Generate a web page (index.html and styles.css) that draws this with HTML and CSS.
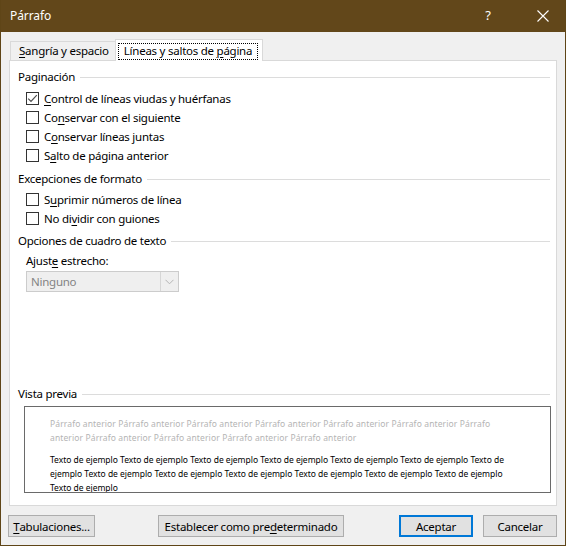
FILE: index.html
```html
<!DOCTYPE html>
<html lang="es">
<head>
<meta charset="utf-8">
<title>Párrafo</title>
<link rel="stylesheet" href="styles.css">
</head>
<body>
<div class="window">
  <div class="titlebar">
    <span class="title">Párrafo</span>
    <span class="help">?</span>
    <span class="close"><svg width="12" height="12" viewBox="0 0 12 12"><path d="M0.5 0.5 L11.5 11.5 M11.5 0.5 L0.5 11.5" stroke="#fff" stroke-width="1.1" fill="none"/></svg></span>
  </div>
  <div class="tabs">
    <div class="tab"><u>S</u>angría y espacio</div>
    <div class="tab active"><span class="focus">Líneas y saltos de <u>p</u>ágina</span></div>
  </div>
  <div class="panel">
    <div class="group-title first"><span>Paginación</span></div>
    <div class="checks">
      <label class="check"><span class="box"><svg width="11" height="11" viewBox="0 0 11 11"><path d="M1.2 5.6 L4 8.4 L9.8 2.2" stroke="#4d4d4d" stroke-width="1.2" fill="none"/></svg></span><span><u>C</u>ontrol de líneas viudas y huérfanas</span></label>
      <label class="check"><span class="box"></span><span>Co<u>n</u>servar con el siguiente</span></label>
      <label class="check"><span class="box"></span><span>C<u>o</u>nservar líneas juntas</span></label>
      <label class="check"><span class="box"></span><span>S<u>a</u>lto de página anterior</span></label>
    </div>
    <div class="group-title second"><span>Excepciones de formato</span></div>
    <div class="checks second-checks">
      <label class="check"><span class="box"></span><span>S<u>u</u>primir números de línea</span></label>
      <label class="check"><span class="box"></span><span>No di<u>v</u>idir con guiones</span></label>
    </div>
    <div class="group-title third"><span>Opciones de cuadro de texto</span></div>
    <div class="field-label">Ajust<u>e</u> estrecho:</div>
    <div class="select">
      <span class="select-value">Ninguno</span>
      <span class="select-arrow"><svg width="9" height="6" viewBox="0 0 9 6"><path d="M0.5 0.8 L4.5 4.8 L8.5 0.8" stroke="#b5b5b5" stroke-width="1" fill="none"/></svg></span>
    </div>
    <div class="spacer"></div>
    <div class="group-title fourth"><span>Vista previa</span></div>
    <div class="preview">
      <div class="prev-para">
        <div class="line">Párrafo anterior Párrafo anterior Párrafo anterior Párrafo anterior Párrafo anterior Párrafo anterior Párrafo</div>
        <div class="line">anterior Párrafo anterior Párrafo anterior Párrafo anterior Párrafo anterior</div>
      </div>
      <div class="sample-para">
        <div class="line">Texto de ejemplo Texto de ejemplo Texto de ejemplo Texto de ejemplo Texto de ejemplo Texto de ejemplo Texto de</div>
        <div class="line">ejemplo Texto de ejemplo Texto de ejemplo Texto de ejemplo Texto de ejemplo Texto de ejemplo Texto de ejemplo</div>
        <div class="line">Texto de ejemplo</div>
      </div>
    </div>
  </div>
  <div class="footer">
    <button class="btn btn-tabs"><u>T</u>abulaciones...</button>
    <button class="btn btn-default">Establecer como pre<u>d</u>eterminado</button>
    <button class="btn btn-ok">Aceptar</button>
    <button class="btn btn-cancel">Cancelar</button>
  </div>
</div>
</body>
</html>
```

FILE: styles.css
```css
* { box-sizing: border-box; }
html, body { margin: 0; padding: 0; }
body {
  font-family: "Noto Sans", "Open Sans", sans-serif;
  font-size: 11.5px;
  letter-spacing: -0.25px;
  color: #000;
  background: #f0f0f0;
}
u { text-decoration: underline; text-underline-offset: 2px; text-decoration-thickness: 1px; }

.window {
  width: 566px;
  height: 546px;
  border: 1px solid #5f4517;
  border-top: none;
  background: #f0f0f0;
  display: flex;
  flex-direction: column;
}

.titlebar {
  height: 32px;
  background: #62471a;
  color: #fff;
  display: flex;
  align-items: center;
  padding-left: 9px;
  flex: none;
}
.title { font-size: 12px; flex: 1; padding-bottom: 1px; letter-spacing: -0.1px; }
.help { font-size: 13px; width: 12px; margin-right: 43px; text-align: center; padding-bottom: 2px; }
.close { width: 12px; height: 12px; margin-right: 16px; display: flex; flex: none; }

.tabs {
  display: flex;
  align-items: flex-end;
  padding-left: 9px;
  margin-top: 7px;
  height: 22px;
  margin-bottom: -1px;
  flex: none;
}
.tab {
  height: 20px;
  width: 106px;
  border: 1px solid #d9d9d9;
  border-bottom: none;
  background: #f0f0f0;
  padding-left: 8px;
  line-height: 18px;
  white-space: nowrap;
  flex: none;
}
.tab.active {
  height: 22px;
  width: 148px;
  margin-left: -1px;
  background: #fff;
  position: relative;
  z-index: 1;
  padding: 2px 0 0 2px;
}
.focus {
  display: inline-block;
  border: 1px dotted #000;
  width: 140px;
  height: 17px;
  line-height: 14px;
  text-align: center;
}

.panel {
  margin: 0 8px;
  height: 446px;
  border: 1px solid #d9d9d9;
  background: #fff;
  display: flex;
  flex-direction: column;
  padding: 8px 6px 12px 8px;
  flex: none;
}

.group-title {
  display: flex;
  align-items: center;
  height: 16px;
  line-height: 16px;
  white-space: nowrap;
}
.group-title::after {
  content: "";
  flex: 1;
  border-top: 1px solid #dcdcdc;
  margin-left: 5px;
  margin-top: 1px;
}
.group-title.second { margin-top: 6px; }
.group-title.third { margin-top: 5px; }
.group-title.fourth { margin-top: 0; }

.checks { margin-top: 4px; padding-left: 8px; display: flex; flex-direction: column; }
.second-checks { margin-top: 3px; }
.check {
  height: 19px;
  display: flex;
  align-items: center;
  white-space: nowrap;
}
.box {
  width: 13px;
  height: 13px;
  border: 1px solid #333;
  background: #fff;
  margin-right: 5px;
  display: flex;
  align-items: center;
  justify-content: center;
  flex: none;
}

.field-label {
  margin-top: 4px;
  padding-left: 8px;
  height: 16px;
  line-height: 16px;
}
.select {
  margin-top: 2px;
  margin-left: 8px;
  width: 153px;
  height: 21px;
  border: 1px solid #cccccc;
  background: #efefef;
  display: flex;
  align-items: center;
}
.select-value { flex: 1; padding-left: 4px; color: #838383; }
.select-arrow {
  width: 18px;
  height: 19px;
  border-left: 1px solid #d6d6d6;
  display: flex;
  align-items: center;
  justify-content: center;
}

.spacer { flex: 1; }

.preview {
  margin: 4px -1px 0 6px;
  height: 87px;
  border: 1px solid #6a6a6a;
  background: #fff;
  overflow: hidden;
  padding: 10px 0 0 25px;
  font-size: 8.5px;
  line-height: 14px;
}
.line { white-space: nowrap; }
.prev-para { color: #b4b4b4; letter-spacing: 0.12px; }
.sample-para { color: #000; margin-top: 8px; letter-spacing: -0.02px; }

.footer {
  display: flex;
  align-items: center;
  margin-top: 9px;
  padding-left: 7px;
}
.btn {
  font-family: inherit;
  font-size: 11.5px;
  letter-spacing: -0.25px;
  height: 22px;
  background: #e1e1e1;
  border: 1px solid #adadad;
  color: #000;
  padding: 0;
  margin: 0;
  display: flex;
  align-items: center;
  justify-content: center;
  flex: none;
}
.btn-tabs { width: 87px; }
.btn-default { width: 186px; margin-left: 63px; }
.btn-ok { width: 74px; margin-left: 55px; border: 2px solid #0078d7; }
.btn-cancel { width: 74px; margin-left: 10px; }
```
